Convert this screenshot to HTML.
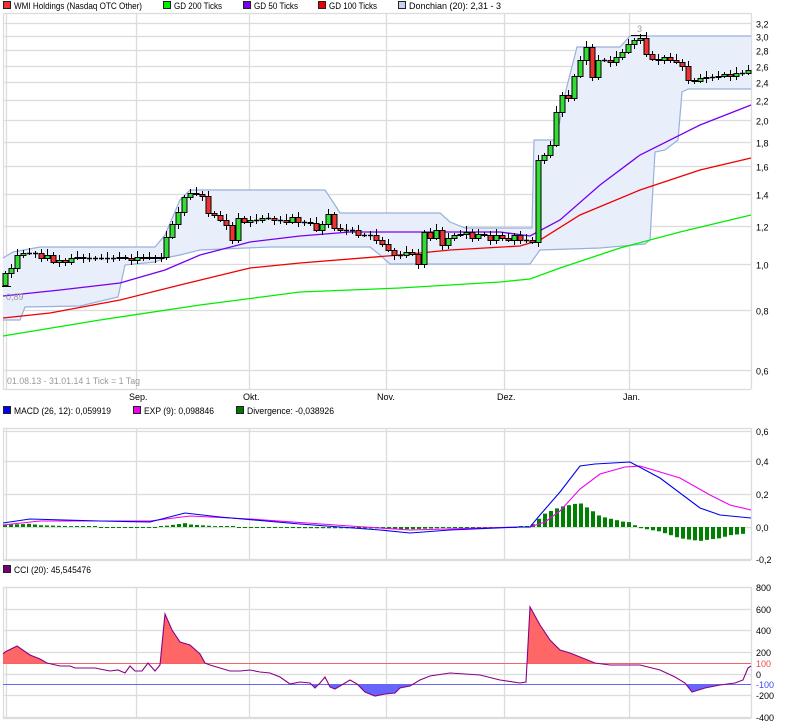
<!DOCTYPE html>
<html><head><meta charset="utf-8">
<style>
html,body{margin:0;padding:0;background:#fff;}
body{width:792px;height:727px;overflow:hidden;position:relative;font-family:"Liberation Sans",sans-serif;}
svg{position:absolute;left:0;top:0;}
text{font-family:"Liberation Sans",sans-serif;font-size:9px;fill:#000;}
</style></head><body>
<svg id="s" width="792" height="727" viewBox="0 0 792 727" xmlns="http://www.w3.org/2000/svg">
<g id="grid" stroke="#dcdcdc" stroke-width="1.3" fill="none"></g>
<g id="bands"></g>
<g id="ma"></g>
<g id="candles"></g>
<g id="macd"></g>
<g id="cci"></g>
<g>
<rect x="3.5" y="1.5" width="7" height="7" fill="#ee3333" stroke="#222"/><text x="14" y="9" textLength="128" lengthAdjust="spacingAndGlyphs">WMI Holdings (Nasdaq OTC Other)</text>
<rect x="163.5" y="1.5" width="7" height="7" fill="#00ee00" stroke="#222"/><text x="174" y="9" textLength="48" lengthAdjust="spacingAndGlyphs">GD 200 Ticks</text>
<rect x="243.5" y="1.5" width="7" height="7" fill="#7700ee" stroke="#222"/><text x="254" y="9" textLength="44" lengthAdjust="spacingAndGlyphs">GD 50 Ticks</text>
<rect x="318.5" y="1.5" width="7" height="7" fill="#ee0000" stroke="#222"/><text x="329" y="9" textLength="48" lengthAdjust="spacingAndGlyphs">GD 100 Ticks</text>
<rect x="398.5" y="1.5" width="7" height="7" fill="#c8d4f0" stroke="#222"/><text x="409" y="9" textLength="92" lengthAdjust="spacingAndGlyphs">Donchian (20): 2,31 - 3</text>
<rect x="3.5" y="406.5" width="7" height="7" fill="#0000ee" stroke="#222"/><text x="14" y="414" textLength="97" lengthAdjust="spacingAndGlyphs">MACD (26, 12): 0,059919</text>
<rect x="133.5" y="406.5" width="7" height="7" fill="#ee00ee" stroke="#222"/><text x="144" y="414" textLength="70" lengthAdjust="spacingAndGlyphs">EXP (9): 0,098846</text>
<rect x="236.5" y="406.5" width="7" height="7" fill="#007700" stroke="#222"/><text x="247" y="414" textLength="87" lengthAdjust="spacingAndGlyphs">Divergence: -0,038926</text>
<rect x="3.5" y="565.5" width="7" height="7" fill="#770077" stroke="#222"/><text x="14" y="573" textLength="77" lengthAdjust="spacingAndGlyphs">CCI (20): 45,545476</text>
</g>
<text x="7" y="384" style="fill:#999" textLength="133" lengthAdjust="spacingAndGlyphs">01.08.13 - 31.01.14   1 Tick = 1 Tag</text>
<text x="129" y="400">Sep.</text><text x="243" y="400">Okt.</text><text x="377" y="400">Nov.</text><text x="497" y="400">Dez.</text><text x="623" y="400">Jan.</text>
<text x="6" y="300" style="fill:#999">0,89</text>
<text x="637" y="32" style="fill:#999">3</text>
<g id="axis"></g>
</svg>
<script>
var S='http://www.w3.org/2000/svg';
function el(p,t,a){var e=document.createElementNS(S,t);for(var k in a)e.setAttribute(k,a[k]);document.getElementById(p).appendChild(e);return e;}
function pts(a){return a.map(function(p){return p[0]+','+p[1];}).join(' ');}
function interp(a,x){for(var i=1;i<a.length;i++){if(x<=a[i][0]){var t=(x-a[i-1][0])/(a[i][0]-a[i-1][0]);return a[i-1][1]+t*(a[i][1]-a[i-1][1]);}}return a[a.length-1][1];}
var L=3,R=751;
var vx=[136,249,386,504,629];
function py(v){return 264-207.5*Math.log(v);}
var pl=[3.2,3.0,2.8,2.6,2.4,2.2,2.0,1.8,1.6,1.4,1.2,1.0,0.8,0.6];
pl.forEach(function(v){var y=Math.round(py(v))+0.5;el('grid','line',{x1:L,x2:R,y1:y,y2:y});el('axis','text',{x:756,y:y+4}).textContent=v.toFixed(1).replace('.',',');});
[[0.6,431],[0.4,461],[0.2,494],[0,527],[-0.2,559]].forEach(function(a){el('grid','line',{x1:L,x2:R,y1:a[1]+.5,y2:a[1]+.5});el('axis','text',{x:756,y:a[1]+4}).textContent=(a[0]<0?'-':'')+Math.abs(a[0]).toFixed(1).replace('.',',');});
[[800,587],[600,609],[400,630],[200,652],[0,674],[-200,695],[-400,717]].forEach(function(a){el('grid','line',{x1:L,x2:R,y1:a[1]+.5,y2:a[1]+.5});el('axis','text',{x:756,y:a[1]+4}).textContent=a[0];});
var t1=el('axis','text',{x:756,y:667});t1.textContent='100';t1.style.fill='#ee4444';
var t2=el('axis','text',{x:756,y:688});t2.textContent='-100';t2.style.fill='#4444ee';
[[13,389],[428,560],[587,718]].forEach(function(r){
 vx.concat([L,6,R]).forEach(function(x){el('grid','line',{x1:x+.5,x2:x+.5,y1:r[0],y2:r[1]});});
 el('grid','line',{x1:L,x2:R,y1:r[0]+.5,y2:r[0]+.5});el('grid','line',{x1:L,x2:R,y1:r[1]+.5,y2:r[1]+.5});
});
var up=[[3,258],[13,252],[40,247],[155,247],[165,235],[180,200],[190,190],[325,190],[335,205],[340,213],[440,213],[450,222],[465,228],[532,228],[534,140],[556,140],[566,90],[577,47],[620,47],[630,36],[751,36]];
var lo=[[3,320],[20,320],[25,307],[80,306],[118,297],[125,265],[155,262],[165,258],[180,255],[200,250],[270,247],[370,247],[380,255],[390,264],[530,264],[540,250],[600,248],[645,244],[650,240],[655,152],[665,150],[678,140],[682,92],[688,89],[751,89]];
el('bands','polygon',{points:pts(up.concat(lo.slice().reverse())),fill:'#e8effb'});
el('bands','polyline',{points:pts(up),fill:'none',stroke:'#98b0dc','stroke-width':1.2});
el('bands','polyline',{points:pts(lo),fill:'none',stroke:'#98b0dc','stroke-width':1.2});
el('ma','polyline',{points:pts([[3,336],[100,320],[200,305],[300,292],[400,288],[500,282],[530,279],[560,268],[620,248],[680,232],[751,215]]),fill:'none',stroke:'#00ee00','stroke-width':1.3});
el('ma','polyline',{points:pts([[3,318],[50,313],[120,300],[180,285],[250,268],[300,263],[400,255],[450,250],[520,246],[540,240],[580,215],[640,190],[700,170],[751,158]]),fill:'none',stroke:'#ee0000','stroke-width':1.3});
el('ma','polyline',{points:pts([[3,296],[60,290],[120,283],[165,270],[200,255],[250,242],[300,236],[350,232],[420,232],[500,232],[530,236],[560,220],[600,185],[640,155],[700,125],[751,105]]),fill:'none',stroke:'#7700ee','stroke-width':1.3});
var C=[[5,273],[11,268],[17,255],[23,253],[29,253],[35,253],[41,258],[47,255],[53,262],[59,260],[65,262],[71,258],[77,257],[83,258],[89,258],[95,258],[101,258],[107,258],[113,258],[119,257],[125,258],[131,260],[137,257],[143,258],[149,257],[155,258],[161,257],[166,237],[172,224],[178,212],[184,197],[190,193],[196,194],[202,196],[208,213],[214,215],[220,220],[226,225],[232,240],[238,218],[244,222],[250,220],[256,220],[262,218],[268,218],[274,220],[280,220],[286,222],[292,217],[298,222],[304,222],[310,223],[316,230],[322,224],[328,214],[334,228],[340,230],[346,230],[352,230],[358,235],[364,235],[370,235],[376,240],[382,244],[388,250],[394,255],[400,255],[406,252],[412,254],[418,264],[424,232],[430,238],[436,230],[442,245],[448,238],[454,235],[460,234],[466,232],[472,238],[478,234],[484,235],[490,240],[496,235],[502,238],[508,240],[514,235],[520,240],[526,240],[532,242],[538,160],[544,155],[550,145],[556,112],[562,95],[568,98],[574,76],[580,60],[586,47],[592,77],[598,60],[604,60],[610,62],[616,57],[622,52],[628,44],[634,40],[640,38],[646,54],[652,59],[658,60],[664,57],[670,60],[676,62],[682,66],[688,80],[694,81],[700,78],[706,77],[712,77],[718,76],[724,74],[730,76],[736,73],[742,73],[748,70]];
var prev=285;
C.forEach(function(c,i){var o=prev,cl=c[1];var t=Math.min(o,cl),b=Math.max(o,cl);
 var g=cl<=o;var wt=t-2-(i*7%5),wb=b+2+(i*3%4);
 el('candles','line',{x1:c[0]+.5,x2:c[0]+.5,y1:wt,y2:wb,stroke:'#000','stroke-width':1});
 if(b-t<1){el('candles','line',{x1:c[0]-2,x2:c[0]+3,y1:t+.5,y2:t+.5,stroke:'#000','stroke-width':1.5});}
 else el('candles','rect',{x:c[0]-2,y:t+.5,width:5,height:b-t,fill:g?'#33dd33':'#ee3333',stroke:'#000','stroke-width':1});
 prev=cl;});
el('candles','line',{x1:2,x2:11,y1:286.5,y2:286.5,stroke:'#000'});
el('candles','line',{x1:631,x2:646,y1:35.5,y2:35.5,stroke:'#000'});
var M=[[3,523],[30,519],[100,521],[150,522],[185,513],[220,517],[300,524],[380,530],[410,533],[450,530],[520,527],[530,527],[540,515],[560,492],[580,466],[595,464],[630,462],[660,478],[700,508],[720,515],[751,518]];
var E=[[3,525],[40,521],[150,521],[190,516],[250,519],[350,526],[410,530],[520,527],[530,527],[545,522],[560,511],[580,489],[600,474],[625,467],[640,466],[680,478],[710,495],[730,505],[751,510]];
for(var x=5;x<=748;x+=6){var d=(interp(E,x)-interp(M,x));d=d>0?d*1.05:d*0.75;if(Math.abs(d)<0.8)d=d<0?-1:1;
 el('macd','rect',{x:x-2,y:d>0?527-d:527,width:4,height:Math.abs(d),fill:'#008000'});}
el('macd','polyline',{points:pts(E),fill:'none',stroke:'#ee00ee','stroke-width':1.1});
el('macd','polyline',{points:pts(M),fill:'none',stroke:'#0000ee','stroke-width':1.1});
var K=[[3,654],[5,652],[17,646],[30,655],[40,659],[47,663],[60,666],[70,666],[75,668],[95,668],[105,670],[110,671],[118,670],[125,673],[130,666],[135,671],[142,671],[148,663],[155,671],[160,665],[165,614],[172,630],[180,642],[190,645],[200,654],[205,663],[210,665],[220,668],[230,671],[240,671],[250,670],[260,672],[270,673],[280,677],[290,684],[300,682],[310,683],[315,688],[320,683],[325,677],[330,687],[335,689],[345,683],[350,680],[357,684],[365,692],[375,696],[385,694],[395,693],[400,688],[410,686],[420,680],[430,676],[450,673],[480,675],[500,680],[520,683],[526,682],[530,607],[540,625],[550,640],[560,650],[570,653],[580,657],[595,663],[610,665],[640,665],[660,670],[675,677],[685,683],[692,692],[705,688],[720,685],[735,683],[743,680],[748,668],[751,666]];
var cp1=el('cci','clipPath',{id:'c1'});cp1.appendChild((function(){var r=document.createElementNS(S,'rect');r.setAttribute('x',0);r.setAttribute('y',580);r.setAttribute('width',792);r.setAttribute('height',83);return r;})());
var cp2=el('cci','clipPath',{id:'c2'});cp2.appendChild((function(){var r=document.createElementNS(S,'rect');r.setAttribute('x',0);r.setAttribute('y',684);r.setAttribute('width',792);r.setAttribute('height',40);return r;})());
el('cci','polygon',{points:pts([[3,663]].concat(K).concat([[751,663]])),fill:'#ff6666','clip-path':'url(#c1)'});
el('cci','polygon',{points:pts([[3,684]].concat(K).concat([[751,684]])),fill:'#6666ff','clip-path':'url(#c2)'});
el('cci','line',{x1:L,x2:R,y1:663.5,y2:663.5,stroke:'#ee6666'});
el('cci','line',{x1:L,x2:R,y1:684.5,y2:684.5,stroke:'#6666ee'});
el('cci','polyline',{points:pts(K),fill:'none',stroke:'#880088','stroke-width':1.1});
</script>
</body></html>
